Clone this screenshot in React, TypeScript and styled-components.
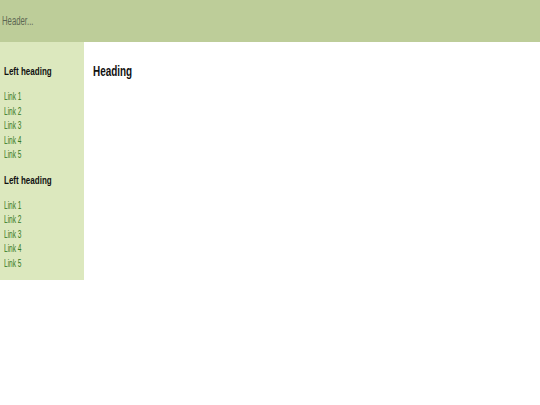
import React from 'react'
import styled, { createGlobalStyle } from 'styled-components'

const GlobalStyle = createGlobalStyle`
  html, body {
    margin: 0;
    padding: 0;
    background: #ffffff;
    font-family: "Liberation Sans", Arial, sans-serif;
  }
`

const sections = [
  { title: 'Left heading', links: ['Link 1', 'Link 2', 'Link 3', 'Link 4', 'Link 5'] },
  { title: 'Left heading', links: ['Link 1', 'Link 2', 'Link 3', 'Link 4', 'Link 5'] },
]

export default function App() {
  return (
    <>
      <GlobalStyle />
      <Page>
        <Header>
          <Narrow $scale={0.62}>Header...</Narrow>
        </Header>
        <Body>
          <Sidebar>
            {sections.map((section, i) => (
              <Section key={i}>
                <SideHeading>
                  <Narrow $scale={0.68}>{section.title}</Narrow>
                </SideHeading>
                <LinkList>
                  {section.links.map((link) => (
                    <li key={link}>
                      <NavLink href="#">
                        <Narrow $scale={0.63}>{link}</Narrow>
                      </NavLink>
                    </li>
                  ))}
                </LinkList>
              </Section>
            ))}
          </Sidebar>
          <Main>
            <Heading>
              <Narrow $scale={0.7}>Heading</Narrow>
            </Heading>
          </Main>
        </Body>
      </Page>
    </>
  )
}

// the reference uses a condensed face, squeeze the regular one to match
const Narrow = styled.span<{ $scale: number }>`
  display: inline-block;
  white-space: nowrap;
  transform: scaleX(${(p) => p.$scale});
  transform-origin: left center;
`

const Page = styled.div`
  width: 540px;
`

const Header = styled.header`
  height: 42px;
  background-color: #bdcd99;
  color: #5d6853;
  font-size: 12.5px;
  display: flex;
  align-items: center;
  padding-left: 2px;
`

const Body = styled.div`
  display: flex;
  align-items: flex-start;
`

const Sidebar = styled.nav`
  width: 84px;
  background-color: #dce8be;
  padding: 21px 0 9px 4px;
  box-sizing: border-box;
`

const Section = styled.div`
  & + & {
    margin-top: 9px;
  }
`

const SideHeading = styled.h3`
  margin: 0;
  font-size: 11.8px;
  font-weight: bold;
  color: #111;
  line-height: 16px;
`

const LinkList = styled.ul`
  list-style: none;
  margin: 11px 0 0;
  padding: 0;
`

const NavLink = styled.a`
  display: block;
  color: #347a22;
  text-decoration: none;
  font-size: 10.4px;
  line-height: 14.5px;
`

const Main = styled.main`
  flex: 1;
  padding: 20px 9px;
`

const Heading = styled.h1`
  margin: 0;
  font-size: 14.2px;
  font-weight: bold;
  color: #111;
  line-height: 18px;
`
